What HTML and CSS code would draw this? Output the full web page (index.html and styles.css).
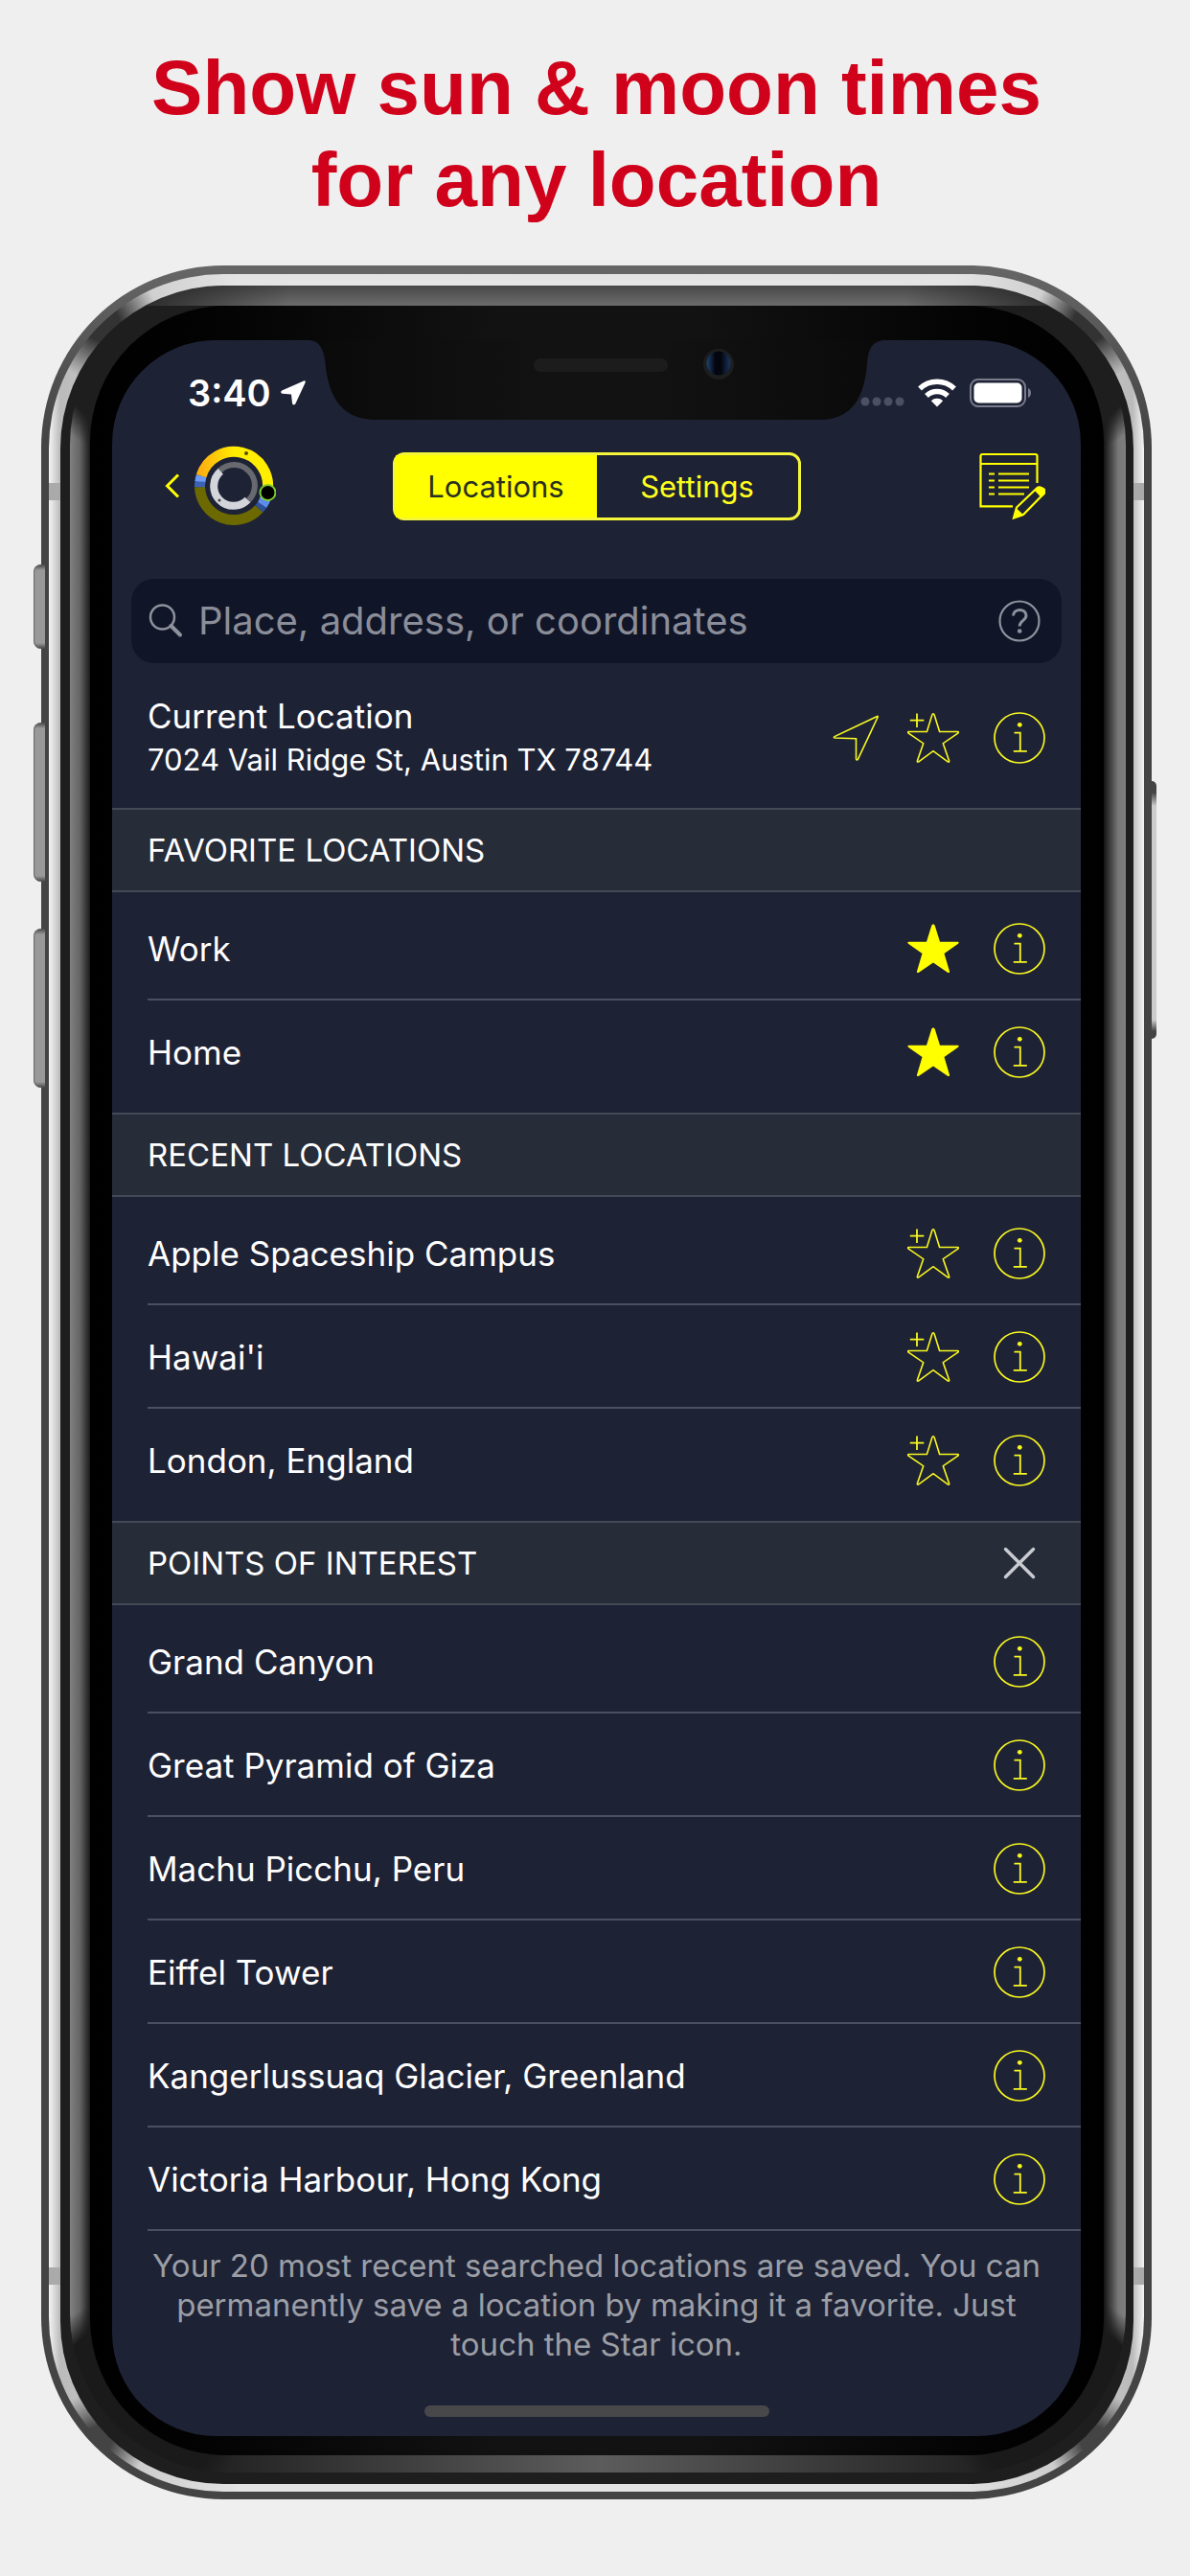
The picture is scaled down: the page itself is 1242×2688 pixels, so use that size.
FILE: index.html
```html
<!DOCTYPE html>
<html lang="en">
<head>
<meta charset="utf-8">
<meta name="viewport" content="width=device-width, initial-scale=1">
<title>Sun &amp; moon times</title>
<link rel="stylesheet" href="styles.css">
</head>
<body>
<svg class="defs" aria-hidden="true">
  <symbol id="info" viewBox="0 0 54 54">
    <circle cx="27" cy="27" r="26" fill="none" stroke="currentColor" stroke-width="1.7"/>
    <circle cx="27.3" cy="13.3" r="2.4" fill="currentColor"/>
    <path d="M21.5 21.7h6.3v19M20.8 40.9h14" fill="none" stroke="currentColor" stroke-width="1.8"/>
  </symbol>
  <symbol id="star-add" viewBox="0 0 54 54">
    <path d="M27 1.8c.6 0 .9.3 1.1 1L33.600 20.500H52.500c1.300 0 1.200 1-.1 1.900L37.300 32.700 43.600 51c.2 1.200-.5 1.500-1.400.9L27 40.700 11.800 51.900c-.9.6-1.600.3-1.400-.9L16.700 32.700 1.600 22.400C.3 21.500.2 20.500 1.500 20.500H20.400L25.900 2.800c.2-.7.5-1 1.100-1z" fill="none" stroke="currentColor" stroke-width="1.6"/>
    <path d="M10 1.500v14.500M2.800 8.700h14.500" stroke="currentColor" stroke-width="1.8"/>
  </symbol>
  <symbol id="star" viewBox="0 0 54 54">
    <path d="M27 1.500c1 0 1.500.6 1.800 1.500L34 19.800H52.500c1.600 0 1.500 1.200.2 2.200L38.500 32 44 50.500c.3 1.500-.8 2.100-2 1.200L27 41.500 12 51.700c-1.200.9-2.300.3-2-1.200L15.500 32 1.300 22C0 21 0 19.800 1.500 19.800H20L25.200 3c.3-.9.8-1.500 1.800-1.500z" fill="currentColor"/>
  </symbol>
</svg>

<h1 class="headline">Show sun &amp; moon times<br>for any location</h1>

<main class="phone">
  <span class="key key-mute"></span>
  <span class="key key-up"></span>
  <span class="key key-down"></span>
  <span class="key key-power"></span>
  <div class="rim"><div class="edge"><div class="glass"><div class="face">
    <div class="screen">
      <svg class="notch" viewBox="0 0 600 83" aria-hidden="true">
        <defs>
          <linearGradient id="notchFill"><stop offset="0" stop-color="#0a0a0a"/><stop offset=".4" stop-color="#121212"/><stop offset=".6" stop-color="#121212"/><stop offset="1" stop-color="#0a0a0a"/></linearGradient>
          <linearGradient id="lens"><stop offset="0" stop-color="#1d4474"/><stop offset=".35" stop-color="#04060f"/><stop offset=".6" stop-color="#04060f"/><stop offset="1" stop-color="#1a3560"/></linearGradient>
        </defs>
        <path d="M0 0C10 1 14 8 16 20C19 55 30 81 66 83H536C568 81 579 58 582 25C583 8 588 1 600 0z" fill="url(#notchFill)"/>
        <rect x="234" y="19" width="140" height="14" rx="7" fill="#1c1c1c"/>
        <circle cx="427" cy="25" r="16" fill="#1d1e20"/>
        <circle cx="427" cy="24" r="12.500" fill="url(#lens)"/>
      </svg>

      <div class="status">
        <div class="status-left">
          <span class="time">3:40</span>
          <svg width="26" height="26" viewBox="0 0 26 26" aria-hidden="true"><path d="M24 .4 1.200 10.500c-1.500.8-1.300 2.900.4 3.200L11 14.500 12 23.800c.3 2 2.600 2.200 3.400.5L25.600 2.200C26.100.9 25.200 0 24 .4z" fill="#fff"/></svg>
        </div>
        <div class="status-right">
          <svg width="46" height="10" viewBox="0 0 46 10" class="dots" aria-hidden="true"><g fill="#4b5063"><circle cx="5" cy="5" r="4.500"/><circle cx="17" cy="5" r="4.500"/><circle cx="29" cy="5" r="4.500"/><circle cx="41" cy="5" r="4.500"/></g></svg>
          <svg width="40" height="30" viewBox="0 0 40 30" aria-hidden="true"><g fill="none" stroke="#fff" stroke-width="5.500"><path d="M2 10.500a26 26 0 0 1 36 0"/><path d="M9 18a16 16 0 0 1 22 0"/></g><path d="M20 29.500 13.800 23.200a9 9 0 0 1 12.400 0z" fill="#fff"/></svg>
          <svg width="66" height="30" viewBox="0 0 66 30" aria-hidden="true"><rect x="1" y="1" width="57" height="28" rx="8" fill="none" stroke="#787c8b" stroke-width="2"/><rect x="4.500" y="4.500" width="50" height="21" rx="5" fill="#fff"/><path d="M61 10c4 1.500 4 8.500 0 10z" fill="#787c8b"/></svg>
        </div>
      </div>

      <nav class="nav">
        <a class="back" href="#" aria-label="Back">
          <svg width="16" height="26" viewBox="0 0 16 26" aria-hidden="true"><path d="M14 1.500 2.500 13 14 24.500" fill="none" stroke="#ff0" stroke-width="3"/></svg>
          <svg width="86" height="84" viewBox="0 0 86 84" aria-hidden="true">
            <defs><linearGradient id="day" x1="0" x2=".5"><stop offset="0" stop-color="#ffb010"/><stop offset="1" stop-color="#ffee00"/></linearGradient></defs>
            <g fill="none" stroke-width="11">
              <path d="M68.400 65.800A35.500 35.500 0 0 1 6.500 43.200" stroke="#6b6900"/>
              <path d="M6.500 43.200A35.500 35.500 0 0 1 7 37" stroke="#3c62b4"/>
              <path d="M7 37.500A35.500 35.500 0 0 1 8.100 31.600" stroke="#6b9bf5"/>
              <path d="M76.900 48.800A35.500 35.500 0 0 1 73.500 58.500" stroke="#8fb6ee"/>
              <path d="M74.500 56.500A35.500 35.500 0 0 1 71.500 62" stroke="#5c8cec"/>
              <path d="M71.500 62A35.500 35.500 0 0 1 68.400 65.800" stroke="#2f529c"/>
              <path d="M8.100 31.600A35.500 35.500 0 0 1 76.900 48.800" stroke="url(#day)"/>
              <path d="M27.600 26A21.500 21.500 0 0 1 57.200 57.200" stroke="#67696e" stroke-width="6"/>
              <path d="M56.500 56.500A20.500 20.500 0 1 1 28.300 26.800" stroke="#d3d5db" stroke-width="8"/>
            </g>
            <circle cx="55" cy="8" r="2" fill="#5a5000"/><circle cx="27" cy="57" r="1.500" fill="#444"/>
            <circle cx="77.500" cy="49" r="8" fill="#000" stroke="#7ccb2a" stroke-width="2"/>
          </svg>
        </a>
        <div class="segments">
          <button class="segment is-on" type="button">Locations</button>
          <button class="segment" type="button">Settings</button>
        </div>
        <button class="icon-button edit" type="button" aria-label="Edit list">
          <svg width="74" height="74" viewBox="-3 0 74 74" aria-hidden="true"><g fill="none" stroke="#ff0" stroke-width="2.200"><path d="M37 58.300H3.500V6q0-2 2-2H60.500q2 0 2 2V34M3.500 14H62.500"/><path d="M12 24.500h6M22 24.500h32M12 31.500h6M22 31.500h32M12 38.500h6M22 38.500h32M12 45.500h6M22 45.500h27"/><path d="M38 70.500 41 59.500 62 39.500q3-2.500 6 .5t.5 6L48 67z"/></g><path d="M37 71.500 40.500 60 48.500 67.500zM59.500 41.500Q65 35 70 39.500T66.500 49z" fill="#ff0"/></svg>
        </button>
      </nav>

      <form class="search">
        <svg width="36" height="36" viewBox="0 0 36 36" aria-hidden="true"><circle cx="14.500" cy="14" r="12.500" fill="none" stroke="#8f929d" stroke-width="2.500"/><path d="M23.500 23 33 32.500" stroke="#8f929d" stroke-width="4" stroke-linecap="round"/></svg>
        <input class="search-field" type="text" placeholder="Place, address, or coordinates" aria-label="Place, address, or coordinates">
        <button class="icon-button" type="button" aria-label="Search help">
          <svg width="44" height="44" viewBox="0 0 44 44" aria-hidden="true"><g fill="none" stroke="#8f929d" stroke-width="2.200"><circle cx="22" cy="22" r="20.500"/><path d="M15.500 16.500c.3-8 13.500-8 13.500 0 0 5-6.800 5-6.800 11" stroke-width="3"/></g><circle cx="22.200" cy="32.500" r="2.300" fill="#8f929d"/></svg>
        </button>
      </form>

      <section class="current">
        <div class="current-text">
          <h2 class="current-title">Current Location</h2>
          <p class="current-address">7024 Vail Ridge St, Austin TX 78744</p>
        </div>
        <div class="actions">
          <button class="icon-button locate" type="button" aria-label="Locate me"><svg width="48" height="48" viewBox="0 0 48 48" aria-hidden="true"><path d="M46.500 1.500 2 22.600c-1 .6-.8 1.400.3 1.400L24.500 24.700V46c.2 1.300 1.400 1.300 2 .2L47 2.500c.4-.8.1-1.300-.5-1z" fill="none" stroke="currentColor" stroke-width="1.600"/></svg></button>
          <button class="icon-button" type="button" aria-label="Add favorite"><svg class="icon"><use href="#star-add"/></svg></button>
          <button class="icon-button" type="button" aria-label="Details"><svg class="icon"><use href="#info"/></svg></button>
        </div>
      </section>

      <h2 class="group">FAVORITE LOCATIONS</h2>
      <ul class="list">
        <li class="row"><span>Work</span><div class="actions"><button class="icon-button is-favorite" type="button" aria-label="Remove favorite"><svg class="icon"><use href="#star"/></svg></button><button class="icon-button" type="button" aria-label="Details"><svg class="icon"><use href="#info"/></svg></button></div></li>
        <li class="row"><span>Home</span><div class="actions"><button class="icon-button is-favorite" type="button" aria-label="Remove favorite"><svg class="icon"><use href="#star"/></svg></button><button class="icon-button" type="button" aria-label="Details"><svg class="icon"><use href="#info"/></svg></button></div></li>
      </ul>

      <h2 class="group">RECENT LOCATIONS</h2>
      <ul class="list">
        <li class="row"><span>Apple Spaceship Campus</span><div class="actions"><button class="icon-button" type="button" aria-label="Add favorite"><svg class="icon"><use href="#star-add"/></svg></button><button class="icon-button" type="button" aria-label="Details"><svg class="icon"><use href="#info"/></svg></button></div></li>
        <li class="row"><span>Hawai'i</span><div class="actions"><button class="icon-button" type="button" aria-label="Add favorite"><svg class="icon"><use href="#star-add"/></svg></button><button class="icon-button" type="button" aria-label="Details"><svg class="icon"><use href="#info"/></svg></button></div></li>
        <li class="row"><span>London, England</span><div class="actions"><button class="icon-button" type="button" aria-label="Add favorite"><svg class="icon"><use href="#star-add"/></svg></button><button class="icon-button" type="button" aria-label="Details"><svg class="icon"><use href="#info"/></svg></button></div></li>
      </ul>

      <h2 class="group">POINTS OF INTEREST
        <button class="icon-button" type="button" aria-label="Hide points of interest"><svg class="icon" viewBox="0 0 54 54"><path d="M12.500 12.500 41.500 41.500M41.500 12.500 12.500 41.500" stroke="#c9cbd1" stroke-width="3.500" stroke-linecap="round"/></svg></button>
      </h2>
      <ul class="list list-last">
        <li class="row"><span>Grand Canyon</span><div class="actions"><button class="icon-button" type="button" aria-label="Details"><svg class="icon"><use href="#info"/></svg></button></div></li>
        <li class="row"><span>Great Pyramid of Giza</span><div class="actions"><button class="icon-button" type="button" aria-label="Details"><svg class="icon"><use href="#info"/></svg></button></div></li>
        <li class="row"><span>Machu Picchu, Peru</span><div class="actions"><button class="icon-button" type="button" aria-label="Details"><svg class="icon"><use href="#info"/></svg></button></div></li>
        <li class="row"><span>Eiffel Tower</span><div class="actions"><button class="icon-button" type="button" aria-label="Details"><svg class="icon"><use href="#info"/></svg></button></div></li>
        <li class="row"><span>Kangerlussuaq Glacier, Greenland</span><div class="actions"><button class="icon-button" type="button" aria-label="Details"><svg class="icon"><use href="#info"/></svg></button></div></li>
        <li class="row"><span>Victoria Harbour, Hong Kong</span><div class="actions"><button class="icon-button" type="button" aria-label="Details"><svg class="icon"><use href="#info"/></svg></button></div></li>
      </ul>

      <p class="note">Your 20 most recent searched locations are saved. You can permanently save a location by making it a favorite. Just touch the Star icon.</p>
      <div class="home-bar"></div>
    </div>
  </div></div></div></div>
</main>
</body>
</html>
```

FILE: styles.css
```css
* { box-sizing: border-box; }

body {
  margin: 0;
  padding: 44px 40px 80px 43px;
  background: #efefef;
  color: #fff;
  font-family: Inter, Roboto, "Liberation Sans", sans-serif;
}

h1, h2, p, ul { margin: 0; padding: 0; font-weight: 400; }
ul { list-style: none; }
svg { display: block; flex: none; }
.defs { position: absolute; width: 0; height: 0; }

.headline {
  margin-bottom: 41px;
  color: #d0021b;
  font: 700 80px/96px "Liberation Sans", Arial, sans-serif;
  text-align: center;
}

/* Phone body, from the outer ring inwards */
.phone {
  position: relative;
  padding: 9px 8px 8px;
  border-radius: 190px;
  background: linear-gradient(#666, #444 180px);
}

.rim {
  padding: 12px 11px 8px 12px;
  border-radius: 182px;
  background:
    radial-gradient(circle at 56px 52px, #333 18px, transparent 60px),
    radial-gradient(circle at calc(100% - 56px) 52px, #333 18px, transparent 60px),
    radial-gradient(circle at 52px calc(100% - 54px), #444 14px, transparent 50px),
    radial-gradient(circle at calc(100% - 52px) calc(100% - 54px), #444 14px, transparent 50px),
    linear-gradient(#aaa, #aaa) 0 218px / 100% 18px no-repeat,
    linear-gradient(#aaa, #aaa) 0 calc(100% - 216px) / 100% 18px no-repeat,
    linear-gradient(90deg, #f4f4f4, #bbb 12px, #e4e4e4 200px, #e4e4e4 calc(100% - 200px), #bbb calc(100% - 12px), #f4f4f4);
}

.edge {
  padding: 0 8px 12px 10px;
  border-radius: 170px;
  background:
    linear-gradient(90deg, #1e1e1e 50px, transparent 240px, transparent calc(100% - 240px), #1e1e1e calc(100% - 50px)) 0 0 / 100% 21px no-repeat,
    linear-gradient(#484848, #6c6c6c) 0 0 / 100% 21px no-repeat,
    #1e1e1e;
}

.glass {
  padding: 21px 23px 18px 21px;
  border-radius: 166px;
  background:
    linear-gradient(90deg, #1e1e1e 40px, transparent 230px, transparent calc(100% - 230px), #1e1e1e calc(100% - 40px)) 0 0 / 100% 21px no-repeat,
    linear-gradient(#484848, #6c6c6c) 0 0 / 100% 21px no-repeat,
    radial-gradient(circle at 70px 70px, #1e1e1e 84px, transparent 110px) 0 0 / 200px 200px no-repeat,
    radial-gradient(circle at 130px 70px, #1e1e1e 84px, transparent 110px) 100% 0 / 200px 200px no-repeat,
    radial-gradient(circle at 70px 130px, #1a1a1a 90px, transparent 116px) 0 100% / 200px 200px no-repeat,
    radial-gradient(circle at 130px 130px, #1a1a1a 90px, transparent 116px) 100% 100% / 200px 200px no-repeat,
    linear-gradient(90deg, #1e1e1e, #5c5c5c 50%, #1e1e1e) 120px 100% / calc(100% - 240px) 18px no-repeat,
    linear-gradient(90deg, #808080, #666 10px, #222 20px, #000 24px, #000 calc(100% - 26px), #333 calc(100% - 18px), #777 calc(100% - 8px), #808080);
}

.face {
  padding: 36px 24px 20px 23px;
  border-radius: 142px;
  background: linear-gradient(90deg, #000, #030303 12%, #121212 40%, #121212 60%, #030303 88%, #000);
}

.key {
  position: absolute;
  left: -8px;
  width: 12px;
  border-radius: 8px 0 0 8px;
  background: linear-gradient(#444, #999 6px, #999 calc(100% - 6px), #444);
  box-shadow: inset 1px 0 1px #666;
}
.key-mute { top: 312px; height: 88px; }
.key-up { top: 477px; height: 166px; }
.key-down { top: 692px; height: 166px; }
.key-power {
  top: 538px;
  left: auto;
  right: -5px;
  width: 5px;
  height: 269px;
  border-radius: 0 5px 5px 0;
  background: linear-gradient(#444 12px, #ccc 26px, #ccc calc(100% - 20px), #444 calc(100% - 8px));
  box-shadow: none;
}

.screen {
  position: relative;
  display: flex;
  flex-direction: column;
  overflow: hidden;
  border-radius: 108px;
  background: #1e2235;
}

.notch {
  position: absolute;
  top: 0;
  left: 50%;
  width: 600px;
  height: 83px;
  transform: translateX(-50%);
}

.status {
  display: flex;
  justify-content: space-between;
  align-items: center;
  height: 110px;
  padding: 0 50px 0 79px;
}
.status-left { display: flex; align-items: center; gap: 10px; }
.status-right { display: flex; align-items: center; gap: 14px; }
.time { font-size: 38px; font-weight: 600; line-height: 50px; }
.dots { align-self: flex-end; margin-bottom: 1px; }

.nav {
  display: grid;
  grid-template-columns: 1fr auto 1fr;
  align-items: center;
  height: 84px;
  padding: 0 37px;
}
.back { display: flex; align-items: center; gap: 14px; padding-left: 18px; }
.edit { justify-self: end; }

.segments {
  display: flex;
  border: 3px solid #f5f53a;
  border-radius: 12px;
}
.segment {
  width: 210px;
  padding: 0;
  border: 0;
  background: none;
  color: #ffff1e;
  font: 400 31px/65px Inter, sans-serif;
}
.segment.is-on { background: #ff0; color: #2a3020; }

.icon-button {
  display: block;
  padding: 0;
  border: 0;
  background: none;
  color: #f8f820;
}
.is-favorite { color: #ff0; }
.icon { width: 54px; height: 54px; }

.search {
  display: flex;
  align-items: center;
  margin: 55px 20px 0;
  padding: 0 22px 0 18px;
  border-radius: 24px;
  background: #101528;
}
.search-field {
  flex: 1;
  min-width: 0;
  height: 88px;
  padding: 0 16px 2px;
  border: 0;
  outline: 0;
  background: none;
  color: #fff;
  font: 400 40px Inter, sans-serif;
}
.search-field::placeholder { color: #8b8e99; opacity: 1; }

.current {
  display: flex;
  justify-content: space-between;
  align-items: center;
  height: 151px;
  padding: 4px 37px 0;
}
.current-title { font-size: 35px; line-height: 46px; }
.current-address { font-size: 31px; line-height: 46px; }

.actions { display: flex; gap: 36px; }
.locate { align-self: center; margin-right: -6px; }

.group {
  display: flex;
  justify-content: space-between;
  align-items: center;
  height: 88px;
  padding: 0 37px;
  border: solid #434955;
  border-width: 2px 0;
  background: #262c38;
  font-size: 33px;
}

.list { padding: 5px 0 9px 37px; }
.list-last { padding-bottom: 0; }
.row {
  display: flex;
  justify-content: space-between;
  align-items: center;
  height: 108px;
  padding: 2px 37px 0 0;
  border-bottom: 2px solid #4b5060;
  font-size: 35px;
}
.list:not(.list-last) .row:last-child { border-color: transparent; }

.note {
  padding: 16px 30px 0;
  color: #9b9ea5;
  font-size: 33px;
  line-height: 41px;
  text-align: center;
}

.home-bar {
  width: 360px;
  height: 12px;
  margin: 43px auto 20px;
  border-radius: 6px;
  background: #48484b;
}
```
